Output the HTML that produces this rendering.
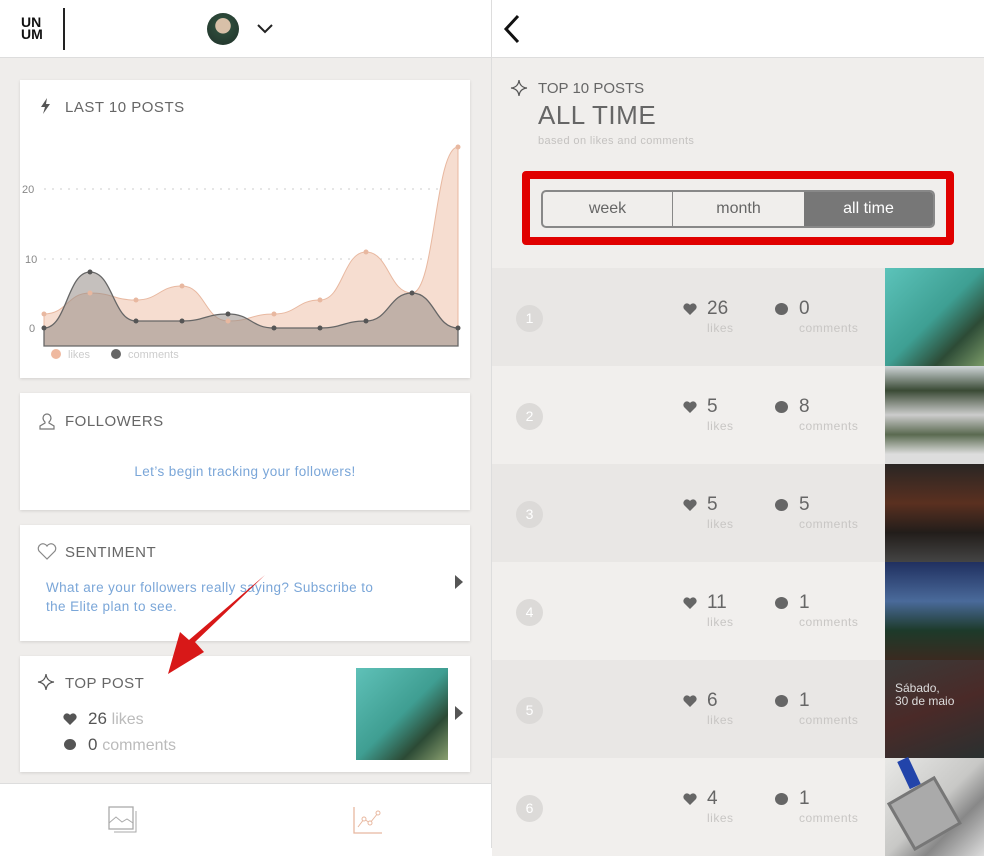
<!DOCTYPE html>
<html><head><meta charset="utf-8"><style>
*{margin:0;padding:0;box-sizing:border-box}
body{width:984px;height:848px;overflow:hidden;font-family:"Liberation Sans",sans-serif;position:relative;background:#fff}
.abs{position:absolute}
.left{left:0;top:0;width:491px;height:848px;background:#efedeb}
.hdr{left:0;top:0;width:491px;height:58px;background:#fff;border-bottom:1px solid #ddd}
.card{position:absolute;left:20px;width:450px;background:#fff;box-shadow:0 1px 3px rgba(0,0,0,.12)}
.ttl{position:absolute;left:45px;font-size:15px;color:#666;letter-spacing:.5px}
.blue{color:#7aa6d8;font-size:13.5px;letter-spacing:.4px}
.right{left:492px;top:0;width:492px;height:848px;background:#f0eeec}
.row{position:absolute;left:0;width:393px;height:98px}
.num{position:absolute;left:24px;top:37px;width:27px;height:27px;border-radius:50%;background:#dcdad8;color:#fff;font-size:14px;text-align:center;line-height:27px}
.v{position:absolute;top:30px;font-size:19px;color:#666}
.s{position:absolute;top:53px;font-size:12px;color:#c8c6c4;letter-spacing:.5px}
.h{position:absolute;left:191px;top:35px}
.thumb{position:absolute;left:393px;width:99px;height:98px}
</style></head><body>
<div class="abs left"></div>
<div class="abs hdr">
 <div class="abs" style="left:21px;top:16px;font:bold 14px/12px 'Liberation Sans',sans-serif;color:#111;letter-spacing:0">UN<br>UM</div>
 <div class="abs" style="left:63px;top:8px;width:2px;height:42px;background:#222"></div>
 <div class="abs" style="left:207px;top:13px;width:32px;height:32px;border-radius:50%;background:radial-gradient(circle at 50% 40%,#d8c0a8 0 30%,#2d4a3a 32%,#1f3029)"></div>
 <svg class="abs" style="left:256px;top:23px" width="18" height="11"><path d="M2 2l7 7 7-7" fill="none" stroke="#222" stroke-width="2"/></svg>
</div>
<div class="card" style="top:80px;height:298px">
 <svg class="abs" style="left:20px;top:18px" width="12" height="16"><path d="M7 0L1 9h4l-2 7 7-10H6z" fill="#555"/></svg>
 <div class="ttl" style="top:19px">LAST 10 POSTS</div>
</div>
<svg class="abs" style="left:0;top:0" width="491" height="380">
 <g font-size="11" fill="#888" font-family="Liberation Sans"><text x="22" y="193">20</text><text x="25" y="263">10</text><text x="29" y="332">0</text></g>
 <g stroke="#ccc" stroke-dasharray="2,6"><line x1="44" y1="189" x2="458" y2="189"/><line x1="44" y1="259" x2="458" y2="259"/><line x1="44" y1="328" x2="458" y2="328"/></g>
 <path d="M44 314C67 314 67 293 90 293C113 293 113 300 136 300C159 300 159 286 182 286C205 286 205 321 228 321C251 321 251 314 274 314C297 314 297 300 320 300C343 300 343 252 366 252C389 252 389 293 412 293C435 293 435 147 458 147L458 346L44 346Z" fill="#f6ddd0" stroke="#e8b8a0" stroke-width="1"/>
 <path d="M44 328C67 328 67 272 90 272C113 272 113 321 136 321C159 321 159 321 182 321C205 321 205 314 228 314C251 314 251 328 274 328C297 328 297 328 320 328C343 328 343 321 366 321C389 321 389 293 412 293C435 293 435 328 458 328L458 346L44 346Z" fill="rgba(150,140,135,.55)" stroke="#666" stroke-width="1.3"/>
 <g fill="#e8b8a0"><circle cx="44" cy="314" r="2.5"/><circle cx="90" cy="293" r="2.5"/><circle cx="136" cy="300" r="2.5"/><circle cx="182" cy="286" r="2.5"/><circle cx="228" cy="321" r="2.5"/><circle cx="274" cy="314" r="2.5"/><circle cx="320" cy="300" r="2.5"/><circle cx="366" cy="252" r="2.5"/><circle cx="458" cy="147" r="2.5"/></g>
 <g fill="#555"><circle cx="44" cy="328" r="2.5"/><circle cx="90" cy="272" r="2.5"/><circle cx="136" cy="321" r="2.5"/><circle cx="182" cy="321" r="2.5"/><circle cx="228" cy="314" r="2.5"/><circle cx="274" cy="328" r="2.5"/><circle cx="320" cy="328" r="2.5"/><circle cx="366" cy="321" r="2.5"/><circle cx="412" cy="293" r="2.5"/><circle cx="458" cy="328" r="2.5"/></g>
 <circle cx="56" cy="354" r="5" fill="#efb9a0"/><text x="68" y="358" font-size="11" fill="#ccc">likes</text>
 <circle cx="116" cy="354" r="5" fill="#666"/><text x="128" y="358" font-size="11" fill="#ccc">comments</text>
</svg>
<div class="card" style="top:393px;height:117px">
 <svg class="abs" style="left:18px;top:19px" width="18" height="18"><path d="M9 2a4 4 0 0 1 4 4c0 2-1 3-2 4v1l5 3v3H2v-3l5-3v-1c-1-1-2-2-2-4a4 4 0 0 1 4-4z" fill="none" stroke="#777" stroke-width="1.2"/></svg>
 <div class="ttl" style="top:20px">FOLLOWERS</div>
 <div class="abs blue" style="left:0;width:450px;text-align:center;top:71px">Let’s begin tracking your followers!</div>
</div>
<div class="card" style="top:525px;height:116px">
 <svg class="abs" style="left:17px;top:18px" width="20" height="18"><path d="M10 16L2 8a4 4 0 0 1 8-5 4 4 0 0 1 8 5z" fill="none" stroke="#888" stroke-width="1.2"/></svg>
 <div class="ttl" style="top:19px">SENTIMENT</div>
 <div class="abs blue" style="left:26px;top:53px;line-height:19px">What are your followers really saying? Subscribe to<br>the Elite plan to see.</div>
 <svg class="abs" style="left:435px;top:50px" width="8" height="14"><path d="M0 0l8 7-8 7z" fill="#555"/></svg>
</div>
<div class="card" style="top:656px;height:116px">
 <svg class="abs" style="left:17px;top:17px" width="18" height="18"><path d="M9 1C9.5 6 12 8.5 17 9 12 9.5 9.5 12 9 17 8.5 12 6 9.5 1 9 6 8.5 8.5 6 9 1z" fill="none" stroke="#555" stroke-width="1.2"/></svg>
 <div class="ttl" style="top:19px">TOP POST</div>
 <svg class="abs" style="left:43px;top:57px" width="14" height="12"><path d="M7 12L1 6A3.2 3.2 0 0 1 7 2a3.2 3.2 0 0 1 6 4z" fill="#555"/></svg>
 <div class="abs" style="left:68px;top:53px;font-size:17px;color:#555">26 <span style="color:#bbb;font-size:16px">likes</span></div>
 <div class="abs" style="left:44px;top:83px;width:12px;height:11px;border-radius:50%;background:#555"></div>
 <div class="abs" style="left:68px;top:79px;font-size:17px;color:#555">0 <span style="color:#bbb;font-size:16px">comments</span></div>
 <div class="abs" style="left:336px;top:12px;width:92px;height:92px;background:linear-gradient(135deg,#5fc1b8,#3f9e92 50%,#2c4a35 75%,#8aa070)"></div>
 <svg class="abs" style="left:435px;top:50px" width="8" height="14"><path d="M0 0l8 7-8 7z" fill="#555"/></svg>
</div>
<div class="abs" style="left:0;top:783px;width:491px;height:65px;background:#fff;border-top:1px solid #ddd">
 <svg class="abs" style="left:108px;top:21px" width="30" height="30"><rect x="1" y="2" width="24" height="22" fill="none" stroke="#aaa" stroke-width="1.3"/><path d="M1 18l7-6 6 5 5-3 6 4" fill="none" stroke="#aaa"/><path d="M28 6v21H6" fill="none" stroke="#aaa"/></svg>
 <svg class="abs" style="left:352px;top:21px" width="32" height="30"><path d="M2 2v26h28" fill="none" stroke="#e8b8a0" stroke-width="1.3"/><path d="M6 22l6-8 6 4 8-10" fill="none" stroke="#e8b8a0"/><circle cx="12" cy="14" r="2" fill="#fff" stroke="#e8b8a0"/><circle cx="18" cy="18" r="2" fill="#fff" stroke="#e8b8a0"/><circle cx="26" cy="8" r="2" fill="#fff" stroke="#e8b8a0"/></svg>
</div>
<div class="abs" style="left:491px;top:0;width:1px;height:848px;background:#ddd"></div>
<div class="abs right">
 <div class="abs" style="left:0;top:0;width:492px;height:58px;background:#fff;border-bottom:1px solid #ddd"></div>
 <svg class="abs" style="left:10px;top:14px" width="20" height="30"><path d="M16 2L4 15l12 13" fill="none" stroke="#111" stroke-width="3"/></svg>
 <svg class="abs" style="left:18px;top:79px" width="18" height="18"><path d="M9 1C9.5 6 12 8.5 17 9 12 9.5 9.5 12 9 17 8.5 12 6 9.5 1 9 6 8.5 8.5 6 9 1z" fill="none" stroke="#555" stroke-width="1.2"/></svg>
 <div class="abs" style="left:46px;top:80px;font-size:15px;color:#666">TOP 10 POSTS</div>
 <div class="abs" style="left:46px;top:100px;font-size:26px;color:#666;letter-spacing:.5px">ALL TIME</div>
 <div class="abs" style="left:46px;top:135px;font-size:11px;color:#c4c2c0;letter-spacing:.4px">based on likes and comments</div>
 <div class="abs" style="left:30px;top:171px;width:432px;height:74px;border:8px solid #e00000;border-radius:4px;background:#f0eeec"></div>
 <div class="abs" style="left:49px;top:190px;width:394px;height:38px;border:2px solid #888;border-radius:5px;overflow:hidden;display:flex;font-size:16px;color:#666">
  <div style="width:130px;text-align:center;line-height:34px;border-right:1px solid #888">week</div>
  <div style="width:131px;text-align:center;line-height:34px">month</div>
  <div style="flex:1;text-align:center;line-height:34px;background:#777;color:#fff">all time</div>
 </div>
 <div class="row" style="top:268px;background:#e9e7e5"><div class="num">1</div><svg class="h" width="14" height="12"><path d="M7 12L1 6A3.2 3.2 0 0 1 7 2a3.2 3.2 0 0 1 6 4z" fill="#666"/></svg><div class="v" style="left:215px">26</div><div class="s" style="left:215px">likes</div><div class="abs" style="left:283px;top:35px;width:13px;height:12px;border-radius:50%;background:#666"></div><div class="v" style="left:307px">0</div><div class="s" style="left:307px">comments</div></div>
 <div class="row" style="top:366px;background:#f1efed"><div class="num">2</div><svg class="h" width="14" height="12"><path d="M7 12L1 6A3.2 3.2 0 0 1 7 2a3.2 3.2 0 0 1 6 4z" fill="#666"/></svg><div class="v" style="left:215px">5</div><div class="s" style="left:215px">likes</div><div class="abs" style="left:283px;top:35px;width:13px;height:12px;border-radius:50%;background:#666"></div><div class="v" style="left:307px">8</div><div class="s" style="left:307px">comments</div></div>
 <div class="row" style="top:464px;background:#e9e7e5"><div class="num">3</div><svg class="h" width="14" height="12"><path d="M7 12L1 6A3.2 3.2 0 0 1 7 2a3.2 3.2 0 0 1 6 4z" fill="#666"/></svg><div class="v" style="left:215px">5</div><div class="s" style="left:215px">likes</div><div class="abs" style="left:283px;top:35px;width:13px;height:12px;border-radius:50%;background:#666"></div><div class="v" style="left:307px">5</div><div class="s" style="left:307px">comments</div></div>
 <div class="row" style="top:562px;background:#f1efed"><div class="num">4</div><svg class="h" width="14" height="12"><path d="M7 12L1 6A3.2 3.2 0 0 1 7 2a3.2 3.2 0 0 1 6 4z" fill="#666"/></svg><div class="v" style="left:215px">11</div><div class="s" style="left:215px">likes</div><div class="abs" style="left:283px;top:35px;width:13px;height:12px;border-radius:50%;background:#666"></div><div class="v" style="left:307px">1</div><div class="s" style="left:307px">comments</div></div>
 <div class="row" style="top:660px;background:#e9e7e5"><div class="num">5</div><svg class="h" width="14" height="12"><path d="M7 12L1 6A3.2 3.2 0 0 1 7 2a3.2 3.2 0 0 1 6 4z" fill="#666"/></svg><div class="v" style="left:215px">6</div><div class="s" style="left:215px">likes</div><div class="abs" style="left:283px;top:35px;width:13px;height:12px;border-radius:50%;background:#666"></div><div class="v" style="left:307px">1</div><div class="s" style="left:307px">comments</div></div>
 <div class="row" style="top:758px;background:#f1efed"><div class="num">6</div><svg class="h" width="14" height="12"><path d="M7 12L1 6A3.2 3.2 0 0 1 7 2a3.2 3.2 0 0 1 6 4z" fill="#666"/></svg><div class="v" style="left:215px">4</div><div class="s" style="left:215px">likes</div><div class="abs" style="left:283px;top:35px;width:13px;height:12px;border-radius:50%;background:#666"></div><div class="v" style="left:307px">1</div><div class="s" style="left:307px">comments</div></div>
 <div class="thumb" style="top:268px;background:linear-gradient(135deg,#5cc3ba,#3e9f93 50%,#2d4b36 75%,#7a9a68)"></div>
 <div class="thumb" style="top:366px;background:linear-gradient(180deg,#cfd6d8 0,#3a4a35 25%,#ccc 50%,#5a6a50 70%,#ddd 90%)"></div>
 <div class="thumb" style="top:464px;background:linear-gradient(180deg,#2a2624,#5a3020 40%,#221d1a 70%,#444)"></div>
 <div class="thumb" style="top:562px;background:linear-gradient(180deg,#203060,#4a6a9a 40%,#1d3a2a 70%,#3a2a20)"></div>
 <div class="thumb" style="top:660px;background:linear-gradient(160deg,#3a3a38,#4a2a28 50%,#2a3030)"><div class="abs" style="left:10px;top:22px;color:#ddd;font-size:12px;line-height:13px">Sábado,<br>30 de maio</div></div>
 <div class="thumb" style="top:758px;background:linear-gradient(135deg,#e8e8e6,#c8c8c6 50%,#888 70%,#ddd)"><div class="abs" style="left:18px;top:0;width:12px;height:30px;background:#2244aa;transform:rotate(-25deg)"></div><div class="abs" style="left:12px;top:28px;width:55px;height:55px;border:3px solid #777;background:#aaa;transform:rotate(-30deg)"></div></div>
</div>
<svg class="abs" style="left:160px;top:570px" width="110" height="110"><path d="M105 5L35 72l9 10L8 104l12-42 9 8z" fill="#d81818"/></svg>
</body></html>
